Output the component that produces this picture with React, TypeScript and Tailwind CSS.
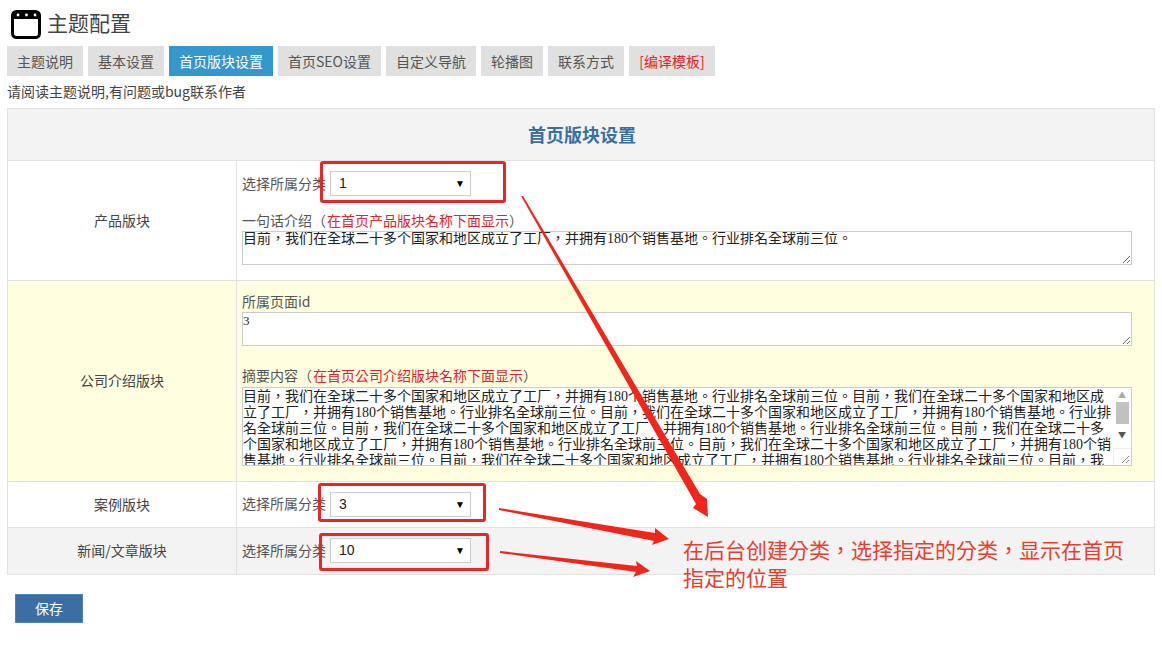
import React from 'react';

const tabs = [
  { label: '主题说明', width: 'w-[76px]' },
  { label: '基本设置', width: 'w-[76px]' },
  { label: '首页版块设置', width: 'w-[104px]', active: true },
  { label: '首页SEO设置', width: 'w-[103px]' },
  { label: '自定义导航', width: 'w-[90px]' },
  { label: '轮播图', width: 'w-[62px]' },
  { label: '联系方式', width: 'w-[76px]' },
  { label: '[编译模板]', width: 'w-[86px]', red: true },
];

const summary = [
  '目前，我们在全球二十多个国家和地区成立了工厂，并拥有180个销售基地。行业排名全球前三位。目前，我们在全球二十多个国家和地区成',
  '立了工厂，并拥有180个销售基地。行业排名全球前三位。目前，我们在全球二十多个国家和地区成立了工厂，并拥有180个销售基地。行业排',
  '名全球前三位。目前，我们在全球二十多个国家和地区成立了工厂，并拥有180个销售基地。行业排名全球前三位。目前，我们在全球二十多',
  '个国家和地区成立了工厂，并拥有180个销售基地。行业排名全球前三位。目前，我们在全球二十多个国家和地区成立了工厂，并拥有180个销',
  '售基地。行业排名全球前三位。目前，我们在全球二十多个国家和地区成立了工厂，并拥有180个销售基地。行业排名全球前三位。目前，我',
].join('\n');

const CategorySelect: React.FC<{ value: string }> = ({ value }) => (
  <div className="flex items-center">
    <span className="w-[88px] pb-[2px] text-[14px] leading-4 text-[#555]">选择所属分类</span>
    <div className="flex h-[25px] w-[141px] items-center justify-between border border-[#ccc] bg-white pl-2 pr-[5px] font-['Liberation_Sans'] text-[14px] text-[#222]">
      <span>{value}</span>
      <span className="text-[10px] text-black">▼</span>
    </div>
  </div>
);

const Row: React.FC<{ label: string; height: string; bg?: string; children: React.ReactNode }> = ({ label, height, bg, children }) => (
  <div className={`flex border-b border-[#e1e1e1] ${height} ${bg ?? ''}`}>
    <div className="flex w-[229px] shrink-0 items-center justify-center border-r border-[#e1e1e1] pb-px text-[14px] text-[#444]">{label}</div>
    <div className="min-w-0 flex-1 pl-[5px]">{children}</div>
  </div>
);

const Scrollbar = () => (
  <div className="flex h-full w-[18px] shrink-0 flex-col items-center bg-white">
    <div className="flex h-[14px] items-center text-[8px] leading-none text-[#aaa]">▲</div>
    <div className="h-[22px] w-[13px] bg-[#c1c1c1]" />
    <div className="flex h-[22px] items-center text-[8px] leading-none text-[#555]">▼</div>
    <div className="mt-auto flex h-[17px] w-full items-end justify-end border-l border-t border-[#eee] pb-px pr-px">
      <svg width="9" height="9" viewBox="0 0 9 9">
        <path d="M8 1 1 8M8 5 5 8" stroke="#888" strokeWidth="1" fill="none" />
      </svg>
    </div>
  </div>
);

const Annotations = () => (
  <>
    <div className="absolute left-[320px] top-[161px] h-[42px] w-[186px] rounded-[3px] border-[3px] border-[#e8262a]" />
    <div className="absolute left-[318px] top-[483px] h-[39px] w-[168px] rounded-[3px] border-[3px] border-[#e8262a]" />
    <div className="absolute left-[319px] top-[533px] h-[38px] w-[170px] rounded-[3px] border-[3px] border-[#e8262a]" />
    <svg className="pointer-events-none absolute left-0 top-0" width="1162" height="651" viewBox="0 0 1162 651">
      <polygon points="521,196 523,196 700,494 707,499 708,517 693,508 696,504" fill="#f0261c" />
      <polygon points="499,508 655,533 655,528 669,539 652,545 654,541 499,510" fill="#f0261c" />
      <polygon points="500,551 637,566 636,561 650,571 633,577 636,572 500,553" fill="#f0261c" />
    </svg>
    <div className="absolute left-[683px] top-[535px] w-[450px] font-['Noto_Sans_CJK_TC',sans-serif] text-[21px] leading-[28px] text-[#ee3b2c]">
      在后台创建分类，选择指定的分类，显示在首页
      <br />
      指定的位置
    </div>
  </>
);

export default function App() {
  return (
    <div className="relative h-[651px] w-[1162px] overflow-hidden bg-white pl-[7px] font-['Noto_Sans_CJK_SC',sans-serif] text-[#444]">
      <div className="flex h-[46px] items-center pb-px pl-1">
        <svg width="30" height="29" viewBox="0 0 30 29" className="mt-[3px]">
          <rect x="1.5" y="1.5" width="27" height="26" rx="4" fill="white" stroke="black" strokeWidth="3" />
          <path d="M1 5a4 4 0 0 1 4-4h20a4 4 0 0 1 4 4v4H1z" fill="black" />
          <circle cx="7" cy="5" r="1.4" fill="white" />
          <circle cx="15.5" cy="5" r="1.4" fill="white" />
          <circle cx="24" cy="5" r="1.4" fill="white" />
        </svg>
        <h1 className="ml-[6px] text-[21px] font-normal text-[#444]">主题配置</h1>
      </div>

      <div className="flex h-[30px] gap-[5px]">
        {tabs.map((tab) => (
          <div
            key={tab.label}
            className={`flex items-center justify-center text-[14px] ${tab.width} ${tab.active ? 'bg-[#3498cc] text-white' : 'bg-[#e0e0e0]'} ${tab.red ? 'text-[#ee1c25]' : ''} ${!tab.active && !tab.red ? 'text-[#555]' : ''}`}
          >
            {tab.label}
          </div>
        ))}
      </div>

      <p className="mt-[7px] h-[25px] text-[14px] leading-4 text-[#444]">请阅读主题说明,有问题或bug联系作者</p>

      <div className="w-[1148px] border-x border-t border-[#e1e1e1]">
        <div className="flex h-[52px] items-center justify-center border-b border-[#e1e1e1] bg-[#f3f3f3] pl-[2px] text-[18px] font-bold text-[#3a6ea5]">
          首页版块设置
        </div>

        <Row label="产品版块" height="h-[120px]">
          <div className="pt-[10px]">
            <CategorySelect value="1" />
          </div>
          <p className="mt-4 font-['Noto_Sans_CJK_TC',sans-serif] text-[14px] leading-4 text-[#555]">
            一句话介绍（<span className="ml-px text-[#e8202a]">在首页产品版块名称下面显示</span>）
          </p>
          <textarea
            readOnly
            defaultValue="目前，我们在全球二十多个国家和地区成立了工厂，并拥有180个销售基地。行业排名全球前三位。"
            className="mt-[3px] block h-[34px] w-[890px] border border-[#ccc] bg-white font-['Liberation_Serif','Noto_Sans_CJK_TC',serif] text-[14px] leading-[14px] text-[#222] outline-none"
          />
        </Row>

        <Row label="公司介绍版块" height="h-[201px]" bg="bg-[#ffffe0]">
          <p className="pt-[12px] text-[14px] leading-4 text-[#555]">所属页面id</p>
          <textarea
            readOnly
            defaultValue="3"
            className="mt-[3px] block h-[34px] w-[890px] border border-[#ccc] bg-white font-['Liberation_Serif',serif] text-[13px] leading-4 text-[#222] outline-none"
          />
          <p className="mt-[21px] font-['Noto_Sans_CJK_TC',sans-serif] text-[14px] leading-4 text-[#555]">
            摘要内容（<span className="ml-px text-[#e8202a]">在首页公司介绍版块名称下面显示</span>）
          </p>
          <div className="mt-[4px] flex h-[79px] w-[890px] border border-[#ccc] bg-white">
            <textarea
              readOnly
              wrap="off"
              defaultValue={summary}
              className="min-w-0 flex-1 resize-none overflow-hidden pt-px font-['Liberation_Serif','Noto_Sans_CJK_TC',serif] text-[14px] leading-[16px] text-[#222] outline-none"
            />
            <Scrollbar />
          </div>
        </Row>

        <Row label="案例版块" height="h-[46px]">
          <div className="flex h-full items-center pb-px">
            <CategorySelect value="3" />
          </div>
        </Row>

        <Row label="新闻/文章版块" height="h-[47px]" bg="bg-[#f3f3f3]">
          <div className="flex h-full items-center pb-px">
            <CategorySelect value="10" />
          </div>
        </Row>
      </div>

      <button className="ml-2 mt-[19px] block h-[29px] w-[68px] border border-[#4a86b4] bg-[#3a6ea5] text-[14px] text-white">保存</button>

      <Annotations />
    </div>
  );
}
